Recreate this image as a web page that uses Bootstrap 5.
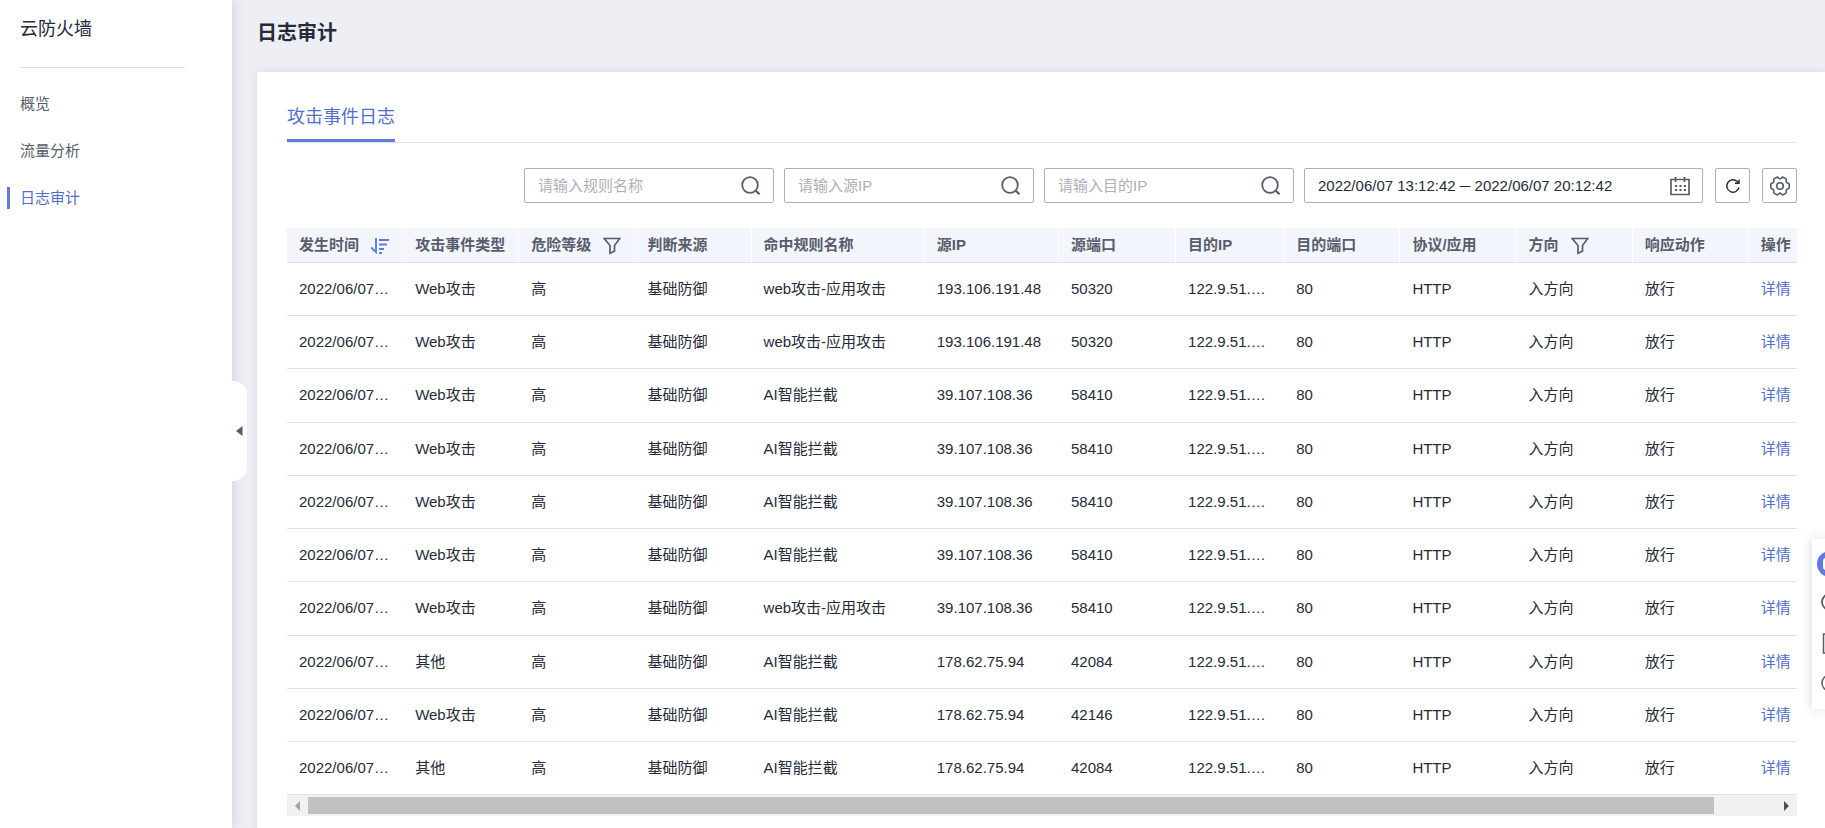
<!DOCTYPE html>
<html lang="zh-CN">
<head>
<meta charset="utf-8">
<meta name="viewport" content="width=device-width, initial-scale=1">
<title>云防火墙 - 日志审计</title>
<link href="https://cdn.jsdelivr.net/npm/bootstrap@5.3.0/dist/css/bootstrap.min.css" rel="stylesheet">
<style>
  body { font-family: "Liberation Sans", "Noto Sans CJK SC", sans-serif; font-size: 15px; line-height: 20px; color: #252b3a; background: #eeeff5; overflow: hidden; }
  a { text-decoration: none; color: #526ecc; }
  .side-panel { width: 232px; background: #fff; box-shadow: 0 0 12px rgba(37,43,58,.18); padding: 17px 0; z-index: 2; }
  .side-title { font-size: 18px; line-height: 24px; margin: 0 20px; padding-bottom: 26px; }
  .side-rule { margin: 0 47px 0 20px; border-top: 1px solid #dfe1e6; }
  .side-menu { padding-top: 25px; gap: 25px; }
  .side-menu .nav-link { line-height: 22px; padding: 0 10px; margin-left: 7px; border-left: 3px solid transparent; color: #575d6c; }
  .side-menu .nav-link.active { color: #526ecc; border-color: #5e7ce0; }
  .side-toggle { right: -15px; top: 381px; width: 15px; height: 100px; background: #fff; border: 0; border-radius: 0 14px 14px 0; padding: 0; }
  .page-title { font-size: 20px; line-height: 28px; font-weight: 700; margin: 19px 0 25px 25px; }
  .log-panel { margin-left: 25px; padding: 30px 30px 40px; padding-right: 28px; background: #fff; box-shadow: 0 0 8px rgba(37,43,58,.1); }
  .log-tabs { border-bottom: 1px solid #dfe1e6; }
  .log-tabs .nav-link { font-size: 18px; line-height: 30px; padding: 0 0 7px; color: #526ecc; border-bottom: 3px solid #5e7ce0; }
  .tool-row { margin: 25px 0; gap: 10px; }
  .field-box { width: 250px; height: 35px; border: 1px solid #adb0b8; border-radius: 2px; padding: 0 12px 0 13px; }
  .field-box.range-box { width: 399px; }
  .field-box input { border: 0; outline: 0; padding: 0; min-width: 0; background: none; color: #252b3a; }
  .field-box input::placeholder { color: #adb0b8; opacity: 1; }
  .tool-btn { width: 35px; height: 35px; margin-left: 2px; border: 1px solid #adb0b8; border-radius: 2px; background: #fff; padding: 0; color: #252b3a; }
  .icon-btn { border: 0; background: none; padding: 0; color: #575d6c; line-height: 0; }
  svg { fill: none; stroke: currentColor; }
  .log-table { table-layout: fixed; width: 100%; border-collapse: separate; border-spacing: 0; }
  .log-table th { height: 35px; padding: 0 0 0 12px; background: #f2f5fc; color: #575d6c; font-weight: 700; border-right: 1px solid #fff; border-bottom: 1px solid #dfe1e6; white-space: nowrap; }
  .log-table th:last-child { border-right: 0; }
  .log-table td { padding: 16px 0 16px 12px; border-bottom: 1px solid #dfe1e6; white-space: nowrap; }
  /* the row pitch is kept by one extra pixel in rows 3 and 7 */
  .log-table tbody tr:nth-child(4n+3) td { padding-bottom: 17px; }
  .scroll-track { height: 21px; background: #f1f1f1; padding: 2px 0; color: #505050; }
  .scroll-thumb { width: 1406px; background: #c1c1c1; }
  .scroll-end { width: 21px; }
  .dock { right: 0; top: 539px; width: 13px; height: 170px; background: #fff; box-shadow: 0 0 12px rgba(37,43,58,.2); overflow: hidden; z-index: 3; }
</style>
</head>
<body>
<svg class="d-none">
  <symbol id="i-search" viewBox="0 0 20 20"><circle cx="9" cy="9" r="7.8" stroke-width="1.8"/><path d="M14.5 14.5l4 3.8" stroke-width="2.2"/></symbol>
  <symbol id="i-filter" viewBox="0 0 18 18"><path d="M1.200 1.500h15.600L11.500 8.500v5.800l-4.500 2V8.500z" stroke-width="1.700"/></symbol>
</svg>
<div class="d-flex vh-100">
  <aside class="side-panel position-relative flex-shrink-0">
    <div class="side-title">云防火墙</div>
    <div class="side-rule"></div>
    <nav class="side-menu nav flex-column">
      <a class="nav-link" href="#">概览</a>
      <a class="nav-link" href="#">流量分析</a>
      <a class="nav-link active" href="#">日志审计</a>
    </nav>
    <button class="side-toggle position-absolute d-flex align-items-center justify-content-center" type="button" aria-label="收起"><svg width="7" height="10" viewBox="0 0 7 10" color="#575d6c"><path d="M6.5 0v10L0 5z" fill="currentColor" stroke="none"/></svg></button>
  </aside>
  <main class="flex-grow-1 d-flex flex-column">
    <h1 class="page-title">日志审计</h1>
    <section class="log-panel flex-grow-1">
      <nav class="log-tabs d-flex"><a class="nav-link" href="#">攻击事件日志</a></nav>
      <form class="tool-row d-flex justify-content-end">
        <div class="field-box d-flex align-items-center"><input class="flex-grow-1" type="text" aria-label="规则名称" placeholder="请输入规则名称"><button class="icon-btn" type="button" aria-label="搜索"><svg width="20" height="20"><use href="#i-search"/></svg></button></div>
        <div class="field-box d-flex align-items-center"><input class="flex-grow-1" type="text" aria-label="源IP" placeholder="请输入源IP"><button class="icon-btn" type="button" aria-label="搜索"><svg width="20" height="20"><use href="#i-search"/></svg></button></div>
        <div class="field-box d-flex align-items-center"><input class="flex-grow-1" type="text" aria-label="目的IP" placeholder="请输入目的IP"><button class="icon-btn" type="button" aria-label="搜索"><svg width="20" height="20"><use href="#i-search"/></svg></button></div>
        <div class="field-box range-box d-flex align-items-center"><input class="flex-grow-1" type="text" aria-label="时间范围" value="2022/06/07 13:12:42 ─ 2022/06/07 20:12:42"><button class="icon-btn" type="button" aria-label="选择日期"><svg width="20" height="20" viewBox="0 0 20 20"><path d="M1 3.500h18v15H1zM5.500 1v5M14.500 1v5" stroke-width="1.700"/><path d="M5 10h11M5 14h11" stroke-width="2" stroke-dasharray="2.200 2.200"/></svg></button></div>
        <button class="tool-btn d-flex align-items-center justify-content-center" type="button" aria-label="刷新"><svg width="16" height="16" viewBox="0 0 16 16"><path d="M14 9.500A6.200 6.200 0 1 1 12.300 3.500L13.500 5M14 1.500V5.300H10" stroke-width="1.400"/></svg></button>
        <button class="tool-btn d-flex align-items-center justify-content-center" type="button" aria-label="设置"><svg width="20" height="20" viewBox="0 0 20 20" color="#575d6c"><path d="M6.800 1.200Q8 1 8.600 2.200Q10 3.400 11.400 2.200Q12 1 13.200 1.200L16 2.900Q16.600 3.600 16.100 4.800Q16 6.800 17.800 7.100Q19.100 7.300 19.200 8.300V11.700Q19.100 12.700 17.800 12.900Q16 13.200 16.100 15.200Q16.600 16.400 16 17.100L13.200 18.800Q12 19 11.400 17.800Q10 16.600 8.600 17.800Q8 19 6.800 18.800L4 17.100Q3.400 16.400 3.900 15.200Q4 13.200 2.200 12.900Q.9 12.700.8 11.700V8.300Q.9 7.300 2.200 7.100Q4 6.800 3.900 4.800Q3.400 3.600 4 2.900z" stroke-width="1.600"/><circle cx="10" cy="10" r="3.300" stroke-width="1.600"/></svg></button>
      </form>
      <table class="log-table">
        <colgroup><col style="width:116px"><col style="width:116px"><col style="width:116px"><col style="width:116px"><col style="width:173px"><col style="width:134px"><col style="width:117px"><col style="width:108px"><col style="width:116px"><col style="width:116px"><col style="width:116px"><col style="width:116px"><col style="width:48px"></colgroup>
        <thead><tr>
          <th>发生时间<button class="icon-btn ms-2 ps-1" type="button" aria-label="排序"><svg width="18" height="16" viewBox="0 0 18 16" color="#5e7ce0"><path d="M5 0v14L0 9.500M8 2h10M8 6.500h8M8 11h5M8 15h3" stroke-width="1.900"/></svg></button></th>
          <th>攻击事件类型</th>
          <th>危险等级<button class="icon-btn ms-2 ps-1" type="button" aria-label="筛选"><svg width="18" height="18"><use href="#i-filter"/></svg></button></th>
          <th>判断来源</th><th>命中规则名称</th><th>源IP</th><th>源端口</th><th>目的IP</th><th>目的端口</th><th>协议/应用</th>
          <th>方向<button class="icon-btn ms-2 ps-1" type="button" aria-label="筛选"><svg width="18" height="18"><use href="#i-filter"/></svg></button></th>
          <th>响应动作</th><th>操作</th>
        </tr></thead>
        <tbody>
          <tr><td>2022/06/07…</td><td>Web攻击</td><td>高</td><td>基础防御</td><td>web攻击-应用攻击</td><td>193.106.191.48</td><td>50320</td><td>122.9.51.…</td><td>80</td><td>HTTP</td><td>入方向</td><td>放行</td><td><a href="#">详情</a></td></tr>
        </tbody>
      </table>
      <div class="scroll-track d-flex" aria-hidden="true">
        <div class="scroll-end d-flex align-items-center justify-content-center flex-shrink-0"><svg width="5" height="10" viewBox="0 0 5 10" color="#a3a3a3"><path d="M5 0v10L0 5z" fill="currentColor" stroke="none"/></svg></div>
        <div class="scroll-thumb"></div>
        <div class="scroll-end d-flex align-items-center justify-content-center flex-shrink-0 ms-auto"><svg width="5" height="10" viewBox="0 0 5 10"><path d="M0 0v10l5-5z" fill="currentColor" stroke="none"/></svg></div>
      </div>
    </section>
  </main>
</div>
<aside class="dock position-fixed" aria-label="快捷工具">
  <svg width="40" height="170" viewBox="0 0 40 170" color="#575d6c"><circle cx="18" cy="25" r="13" fill="#5e7ce0" stroke="none"/><rect x="11" y="19" width="14" height="12" rx="3" fill="#fff" stroke="none"/><circle cx="18" cy="63" r="8" stroke-width="1.800"/><rect x="11.500" y="95" width="15" height="19" stroke-width="1.500"/><circle cx="18" cy="144" r="8" stroke-width="1.500"/></svg>
</aside>
<script>
  // The remaining events: type, rule, source address and source port
  const events = [
    ['Web攻击', 'web攻击-应用攻击', '193.106.191.48', '50320'],
    ['Web攻击', 'AI智能拦截', '39.107.108.36', '58410'],
    ['Web攻击', 'AI智能拦截', '39.107.108.36', '58410'],
    ['Web攻击', 'AI智能拦截', '39.107.108.36', '58410'],
    ['Web攻击', 'AI智能拦截', '39.107.108.36', '58410'],
    ['Web攻击', 'web攻击-应用攻击', '39.107.108.36', '58410'],
    ['其他', 'AI智能拦截', '178.62.75.94', '42084'],
    ['Web攻击', 'AI智能拦截', '178.62.75.94', '42146'],
    ['其他', 'AI智能拦截', '178.62.75.94', '42084']
  ];
  const body = document.querySelector('.log-table tbody');
  for (const [type, rule, ip, port] of events) {
    const row = body.rows[0].cloneNode(true);
    row.cells[1].textContent = type;
    row.cells[4].textContent = rule;
    row.cells[5].textContent = ip;
    row.cells[6].textContent = port;
    body.append(row);
  }
</script>
<script src="https://cdn.jsdelivr.net/npm/bootstrap@5.3.0/dist/js/bootstrap.bundle.min.js"></script>
</body>
</html>
